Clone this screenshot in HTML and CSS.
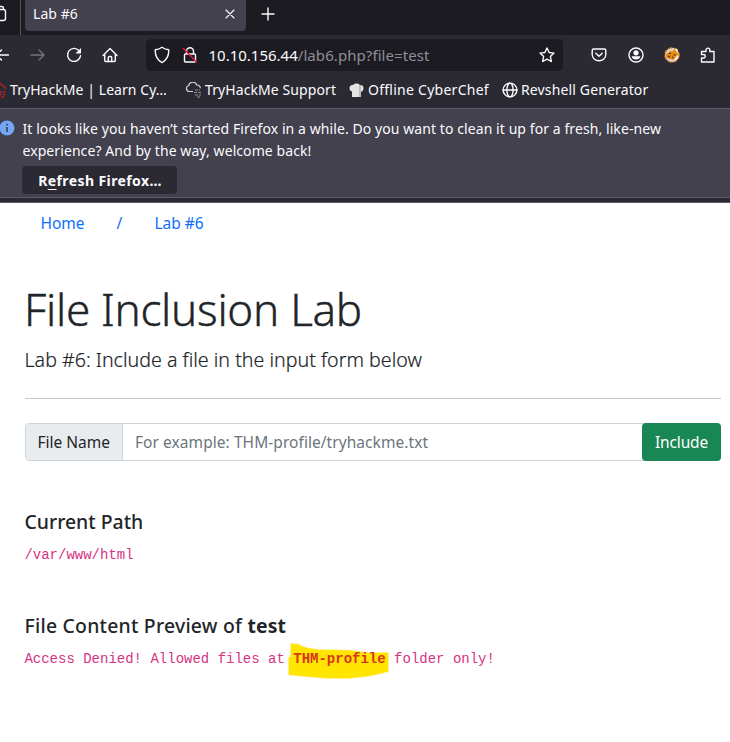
FILE: index.html
```
<!DOCTYPE html>
<html lang="en">
<head>
<meta charset="utf-8">
<title>Lab #6</title>
<link rel="stylesheet" href="styles.css">
</head>
<body>
<header class="browser">
  <div class="tabs">
    <div class="tabs-view"><svg width="7" height="22" viewBox="0 0 7 22" class="line"><path d="M0 6.500h1.500q2 0 2 2M0 9.500h3q2.500 0 2.500 2v7q0 2-2 2H0"/></svg></div>
    <div class="tab"><span>Lab #6</span><svg width="10" height="10" viewBox="0 0 10 10" class="line thin"><path d="M1 1l8 8M9 1L1 9"/></svg></div>
    <svg class="line new-tab" width="14" height="14" viewBox="0 0 14 14"><path d="M7 1v12M1 7h12"/></svg>
  </div>
  <div class="toolbar">
    <svg class="line back" width="10" height="16" viewBox="0 0 10 16"><path d="M0 8h8.500M0 4.500L1.500 3M0 11.500L1.500 13"/></svg>
    <svg class="line forward" width="16" height="16" viewBox="0 0 16 16"><path d="M1 8h13M9 3l5 5-5 5"/></svg>
    <svg class="line reload" width="16" height="16" viewBox="0 0 16 16"><path d="M13.500 4.300A6.500 6.500 0 1 0 14.500 8.800"/><path d="M15 1v5.500H9.500z" fill="currentColor" stroke="none"/></svg>
    <svg class="line home" width="16" height="16" viewBox="0 0 16 16"><path d="M1 8.500L8 1.500l7 7M2.700 7v6.500q0 1 1 1h8.600q1 0 1-1V7M6.300 14.500v-4q0-1 1-1h1.400q1 0 1 1v4"/></svg>
    <div class="urlbar">
      <svg class="line shield" width="16" height="18" viewBox="0 0 16 18"><path d="M8 1.200q3 2.200 6.700 2.500Q15.300 12.500 8 16.600Q.7 12.500 1.300 3.700Q5 3.400 8 1.200z"/></svg>
      <svg class="line lock" width="16" height="18" viewBox="0 0 16 18"><path d="M4.500 8V5.200a3.500 3.500 0 0 1 7 0V8M3.500 8h9q1 0 1 1v6q0 1-1 1h-9q-1 0-1-1V9q0-1 1-1z"/><path class="slash" d="M1.500 2.500l13 13.500"/></svg>
      <span class="url"><b>10.10.156.44</b>/lab6.php?file=test</span>
      <svg class="line star" width="16" height="16" viewBox="0 0 16 16"><path d="M8 1l2.100 4.500 4.900.6-3.600 3.400.9 5L8 12.100l-4.300 2.400.9-5L1 6.100l4.900-.6z"/></svg>
    </div>
    <svg class="line pocket" width="16" height="16" viewBox="0 0 16 16"><path d="M2.700 2h10.600q1.500 0 1.500 1.500V7.500a6.800 6.300 0 0 1-13.600 0V3.500Q1.200 2 2.700 2zM4.800 6.300L8 9.200l3.200-2.900"/></svg>
    <svg class="line account" width="16" height="16" viewBox="0 0 16 16"><circle cx="8" cy="8" r="7"/><g fill="currentColor" stroke="none"><circle cx="8" cy="5.800" r="2.600"/><path d="M3.600 9.300h8.800q-.8 3.200-4.400 3.200t-4.400-3.200z"/></g></svg>
    <svg class="fox" width="16" height="16" viewBox="0 0 16 16"><circle cx="8" cy="8" r="7.200" fill="#d8d4cf"/><circle cx="8" cy="8" r="7.200" fill="none" stroke="#db7b14" stroke-width="1.200" stroke-dasharray="4 2"/><path d="M1.500 8L5 4.500 9 4l2-2.500 1 3 2.500 3L12 10l-2 3-4-1-3-.5z" fill="#e88911"/><path d="M5 6.500h2M9.500 8h2M4 9l2 1M8 11l1-1" stroke="#3a3035" stroke-width="1.200"/><path d="M12 2l1.500 2M11 13l3-4" stroke="#fff" stroke-width="1.500"/></svg>
    <svg class="line puzzle" width="16" height="16" viewBox="0 0 16 16"><path d="M1.500 15V11h2a1.700 1.700 0 0 0 0-3.500h-2V4.500h4.500V3a1.900 1.900 0 0 1 3.800 0v1.500H14V15z"/></svg>
  </div>
  <nav class="bookmarks">
    <a class="bm learn"><svg width="16" height="16" viewBox="0 0 16 16" fill="none" stroke="#b3202b" stroke-width="1.400"><path d="M9 8H4.500A3 3 0 0 1 4 2.500 4.500 4.500 0 0 1 12 3.500Q15.500 4.500 15 7.500"/><path d="M9 10h6M9 12.500h6M11 15h4" stroke-dasharray="3 1"/></svg><span>TryHackMe | Learn Cy…</span></a>
    <a class="bm support"><svg width="17" height="16" viewBox="0 0 17 16" fill="none" stroke="#d5d5da" stroke-width="1.200"><path d="M8 9.500H4A3.100 3.100 0 0 1 3.600 3.500 4.300 4.300 0 0 1 11.800 3Q15 3 15.400 6.200"/><path d="M10 8h5M9 10.500h7M10 13h6M12 15h3" stroke="#95959c" stroke-dasharray="3 1"/></svg><span>TryHackMe Support</span></a>
    <a class="bm chef"><svg width="15" height="15" viewBox="0 0 15 15"><path d="M3 14V8.500Q.3 8 .5 4.500.8 1.500 4 2 5 .2 7.500.5 10 .2 11 2q3.300-.5 3.500 2.500.2 3.500-2.500 4.500v5z" fill="#e4e4e4"/><path d="M10 2h2v12h-2z" fill="#bcbcbc"/></svg><span>Offline CyberChef</span></a>
    <a class="bm shell"><svg class="line" width="16" height="16" viewBox="0 0 16 16"><circle cx="8" cy="8" r="6.900"/><ellipse cx="8" cy="8" rx="3.100" ry="6.900"/><path d="M1 8h14"/></svg><span>Revshell Generator</span></a>
  </nav>
  <div class="notice">
    <svg class="info" width="15" height="16" viewBox="1 0 15 16"><circle cx="8" cy="8" r="7.500" fill="#73a7f5"/><path d="M8 7v5M8 3.800v1.700" stroke="#3b3a4d" stroke-width="1.500"/></svg>
    <div class="message">
      <p>It looks like you haven’t started Firefox in a while. Do you want to clean it up for a fresh, like-new<br>experience? And by the way, welcome back!</p>
      <button class="refresh">R<u>e</u>fresh Firefox…</button>
    </div>
  </div>
</header>
<main class="page">
  <nav class="crumbs"><a>Home</a><a class="sep">/</a><a>Lab #6</a></nav>
  <h1>File Inclusion Lab</h1>
  <p class="lead">Lab #6: Include a file in the input form below</p>
  <hr>
  <div class="group">
    <span class="label">File Name</span>
    <span class="field">For example: THM-profile/tryhackme.txt</span>
    <button class="include">Include</button>
  </div>
  <section>
    <h5>Current Path</h5>
    <code>/var/www/html</code>
  </section>
  <section>
    <h5 class="preview">File Content Preview of <b>test</b></h5>
    <code>Access Denied! Allowed files at <span class="marked"><svg width="102" height="38" viewBox="0 0 102 38"><path d="M2.500 1.500L10 2Q18 6.500 31 7.500L60 8 80 10.500H100.500V29.500Q84 35 60 36.500H40Q15 34.500 .5 33V15H2.500z" fill="#ffe500" stroke="#fff0a0" stroke-width=".6"/></svg><b>THM-profile</b></span> folder only!</code>
  </section>
</main>
</body>
</html>
```
FILE: styles.css
```
* { box-sizing: border-box; }
body { margin: 0; height: 742px; overflow: hidden; background: #fff; color: #212529; font: 15.5px/24px "Noto Sans", sans-serif; }
svg { display: block; flex: none; }
p, h1, h5 { margin: 0; }
b { font-weight: 700; }
.line { fill: none; stroke: currentColor; stroke-width: 1.4; stroke-linecap: round; stroke-linejoin: round; }
.thin { stroke-width: 1.1; }
button { font: inherit; border: 0; padding: 0; }

.browser { height: 203px; background: #2b2a33; color: #fbfbfe; font-size: 14px; white-space: nowrap; overflow: hidden; border-bottom: 1px solid #5b5a66; }
.tabs { display: flex; height: 35px; background: #1c1b22; }
.tabs-view { width: 21px; border-right: 1px solid #55545e; }
.tab { display: flex; align-items: center; justify-content: space-between; width: 221px; height: 31px; margin-left: 4px; padding: 0 11px 4px 8px; background: #42414d; border-radius: 0 0 4px 4px; letter-spacing: .05px; }
.tab span { padding-top: 1px; }
.new-tab { margin: 7px 0 0 15px; }

.toolbar { display: flex; align-items: center; height: 40px; }
.forward { margin-left: 20px; color: #74737c; }
.reload { margin-left: 20px; }
.home { margin-left: 20px; }
.urlbar { display: flex; align-items: center; width: 417px; height: 32px; margin-left: 28px; padding: 0 8px; background: #1c1b22; border-radius: 5px; }
.lock { margin-left: 12px; }
.slash { stroke: #e8173f; }
.url { flex: 1; margin-left: 10.5px; color: #8f8e96; font-size: 15px; letter-spacing: .07px; }
.url b { color: #fbfbfe; font-weight: 400; letter-spacing: 0; }
.pocket { margin-left: 28px; }
.account { margin-left: 21px; }
.fox, .puzzle { margin-left: 20px; }

.bookmarks { display: flex; height: 33px; padding-top: 3px; }
.bm { display: flex; flex: none; align-items: center; height: 24px; letter-spacing: .09px; }
.learn { width: 195px; margin-left: -10px; gap: 4px; }
.learn span { letter-spacing: .06px; }
.support { width: 164px; gap: 3px; }
.chef { width: 153px; gap: 4px; letter-spacing: .26px; }
.shell { gap: 3px; letter-spacing: .14px; }

.notice { display: flex; height: 90px; padding-top: 9px; background: #42414d; border-top: 1px solid #5b5a66; border-bottom: 1px solid #5b5a66; }
.info { margin-top: 2px; }
.message { margin-left: 7px; }
.message p { padding-left: .5px; line-height: 22px; letter-spacing: .08px; }
.refresh { display: block; width: 155px; height: 28px; margin-top: 4px; padding: 2px 0 0 1px; background: #2b2a33; color: #fbfbfe; border-radius: 4px; font-weight: 700; letter-spacing: .4px; }
.refresh u { text-underline-offset: 3px; text-decoration-thickness: 1px; }

.page { padding: 8px 9px 0 25px; }
.crumbs { display: flex; gap: 32px; padding-left: 15.5px; color: #0d6efd; }
h1 { margin-top: 48px; font-size: 44px; font-weight: 300; line-height: 53px; letter-spacing: -.28px; margin-left: -1px; -webkit-text-stroke: .4px; }
.lead { margin-top: 9px; font-size: 19.6px; font-weight: 300; line-height: 30px; margin-left: -.5px; letter-spacing: .02px; -webkit-text-stroke: .2px; }
hr { height: 1px; margin: 23px 0 24px; border: 0; background: #c8c8ca; }
.group { display: flex; height: 38px; border: 1px solid #ced4da; border-radius: 4px; line-height: 36px; }
.label { width: 97px; padding-left: 11.5px; background: #e9ecef; border-right: 1px solid #ced4da; border-radius: 3px 0 0 3px; }
.field { flex: 1; padding-left: 12px; color: #6c757d; letter-spacing: .06px; }
.include { width: 79px; height: 38px; margin: -1px -1px 0 0; background: #198754; color: #fff; border-radius: 4px; letter-spacing: -.15px; }
section { margin-top: 49px; height: 56px; }
section + section { margin-top: 48px; }
h5 { margin-bottom: 9px; margin-left: -.5px; font-size: 19.4px; font-weight: 500; line-height: 24px; }
.preview { letter-spacing: .23px; }
.preview b { letter-spacing: .1px; }
code { display: block; margin-left: -.6px; font: 14px/24px "Liberation Mono", monospace; color: #d63384; white-space: pre; }
.marked { position: relative; z-index: 0; color: #d9361c; }
.marked svg { position: absolute; z-index: -1; left: -5px; top: -9.5px; }
```
